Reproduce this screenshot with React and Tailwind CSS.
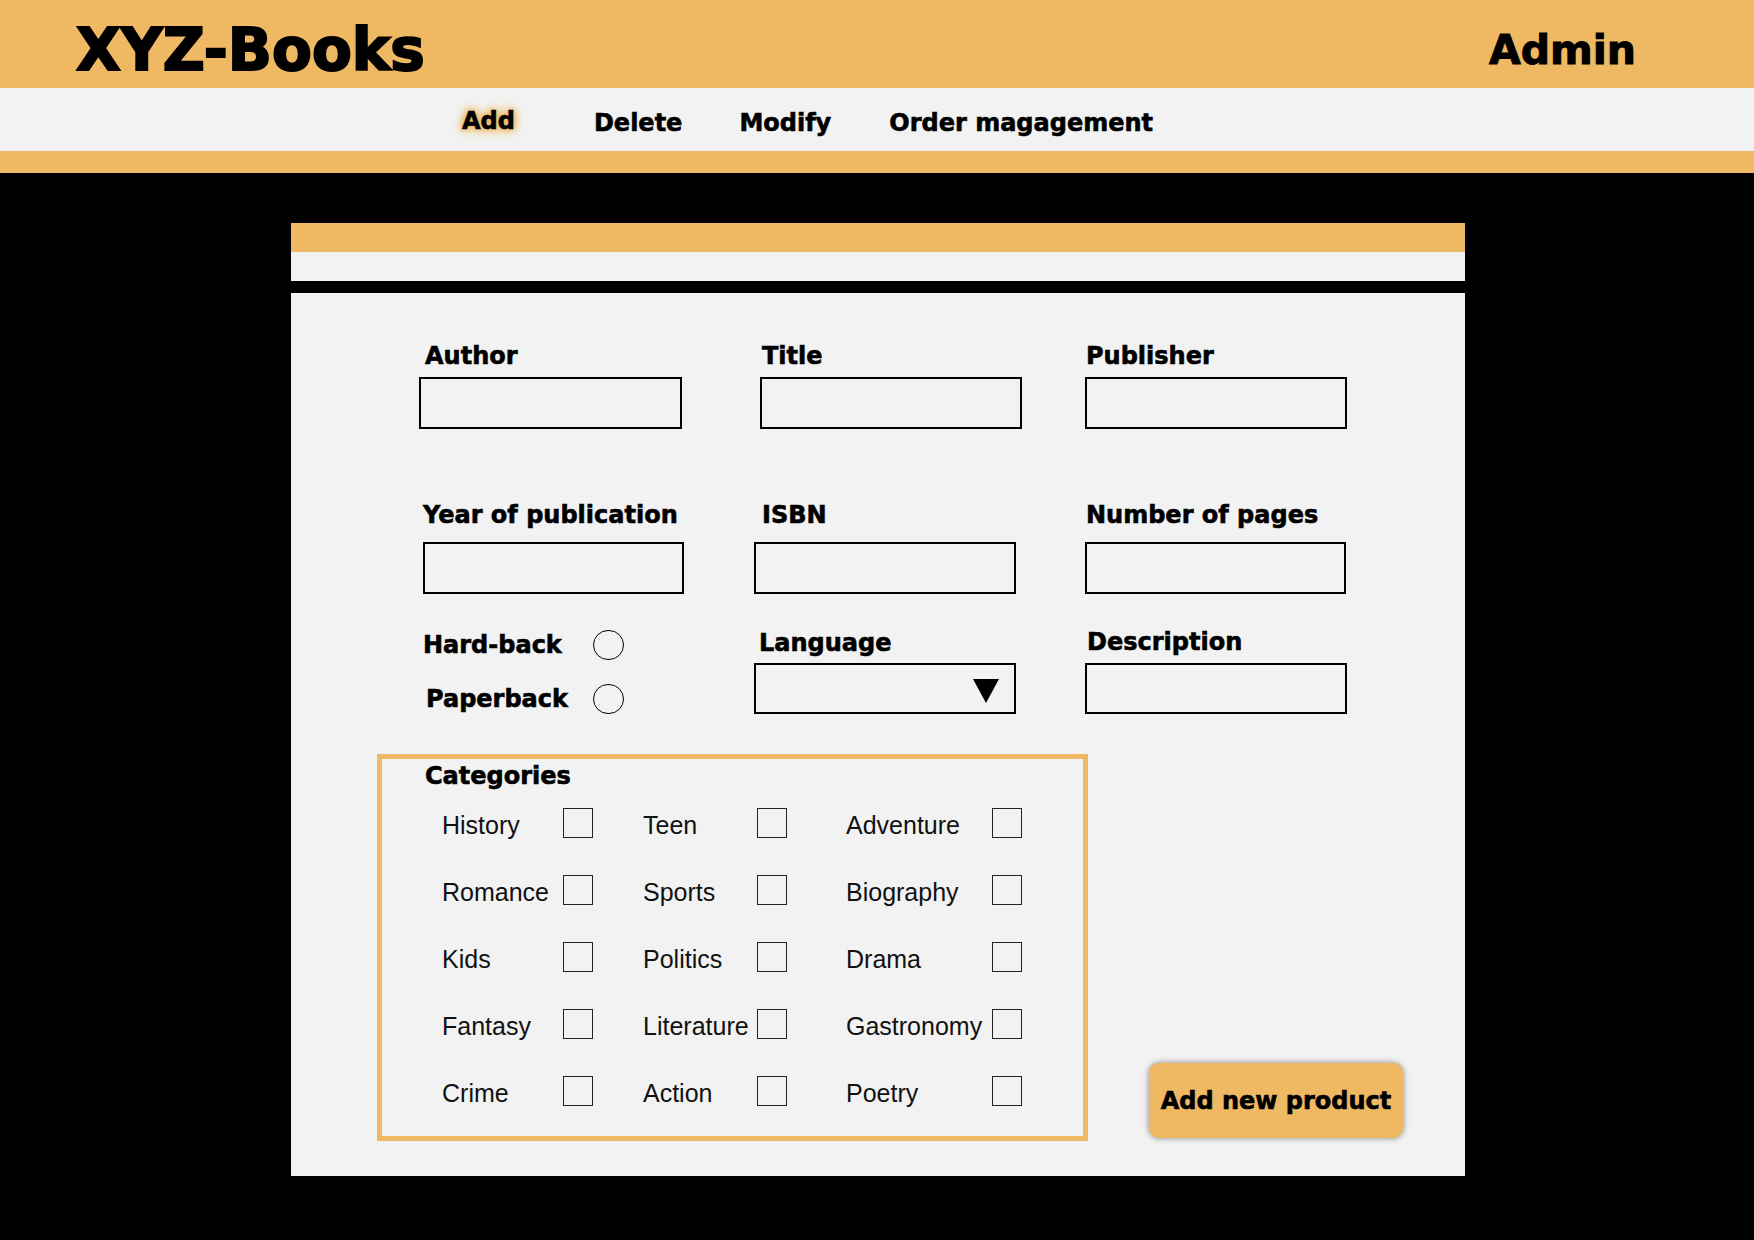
import React from "react";

const categories = [
  ["History", "Teen", "Adventure"],
  ["Romance", "Sports", "Biography"],
  ["Kids", "Politics", "Drama"],
  ["Fantasy", "Literature", "Gastronomy"],
  ["Crime", "Action", "Poetry"],
];

const cellWidths = ["w-[201px]", "w-[203px]", "w-[176px]"];
const labelWidths = ["w-[121px]", "w-[114px]", "w-[146px]"];

const Label = ({ children, className = "" }) => (
  <div
    className={`font-['DejaVu_Sans',sans-serif] text-[24px] leading-[24px] font-bold text-black whitespace-nowrap [-webkit-text-stroke:0.6px_black] ${className}`}
  >
    {children}
  </div>
);

const TextBox = ({ className = "" }) => (
  <input
    type="text"
    className={`block border-2 border-black bg-transparent outline-none ${className}`}
  />
);

const Radio = () => (
  <span className="block w-[31px] h-[30px] rounded-full border-[1.5px] border-black" />
);

const App = () => {
  return (
    <div className="w-full h-[1240px] bg-black overflow-hidden">
      {/* header */}
      <header className="h-[88px] bg-[#efb964] flex items-start justify-between pl-[76px] pr-[118px]">
        <div className="mt-[21px] font-['DejaVu_Sans',sans-serif] text-[58px] leading-[58px] font-bold text-black [-webkit-text-stroke:2px_black]">
          XYZ-Books
        </div>
        <div className="mt-[30px] font-['DejaVu_Sans',sans-serif] text-[41px] leading-[41px] font-bold text-black [-webkit-text-stroke:1px_black]">
          Admin
        </div>
      </header>

      <nav className="h-[63px] bg-[#f2f2f2] flex items-start pl-[462px] pt-[23px]">
        <Label className="-mt-[2px] [text-shadow:0_0_4px_#efb964,0_0_7px_#efb964,0_0_10px_#efb964,0_0_12px_#efb964]">
          Add
        </Label>
        <Label className="ml-[79px]">Delete</Label>
        <Label className="ml-[57px]">Modify</Label>
        <Label className="ml-[58px]">Order magagement</Label>
      </nav>
      <div className="h-[22px] bg-[#efb964]" />

      {/* form panel */}
      <div className="ml-[291px] mt-[50px] w-[1174px]">
        <div className="h-[29px] bg-[#efb964]" />
        <div className="h-[29px] bg-[#f2f2f2]" />

        <div className="mt-[12px] bg-[#f2f2f2] pt-[51px] pb-[35px]">
          {/* row 1 */}
          <div className="flex">
            <div className="ml-[128px] w-[263px]">
              <Label className="pl-[6px]">Author</Label>
              <TextBox className="mt-[9px] w-[263px] h-[52px]" />
            </div>
            <div className="ml-[78px] w-[262px]">
              <Label className="pl-[2px]">Title</Label>
              <TextBox className="mt-[9px] w-[262px] h-[52px]" />
            </div>
            <div className="ml-[63px] w-[262px]">
              <Label className="pl-[1px]">Publisher</Label>
              <TextBox className="mt-[9px] w-[262px] h-[52px]" />
            </div>
          </div>

          {/* row 2 */}
          <div className="flex mt-[74px]">
            <div className="ml-[132px] w-[261px]">
              <Label>Year of publication</Label>
              <TextBox className="mt-[15px] w-[261px] h-[52px]" />
            </div>
            <div className="ml-[70px] w-[262px]">
              <Label className="pl-[8px]">ISBN</Label>
              <TextBox className="mt-[15px] w-[262px] h-[52px]" />
            </div>
            <div className="ml-[69px] w-[261px]">
              <Label className="pl-[1px]">Number of pages</Label>
              <TextBox className="mt-[15px] w-[261px] h-[52px]" />
            </div>
          </div>

          {/* row 3 */}
          <div className="flex mt-[36px]">
            <div className="ml-[132px] w-[331px]">
              <div className="flex items-center h-[30px]">
                <Label className="w-[170px]">Hard-back</Label>
                <Radio />
              </div>
              <div className="flex items-center h-[30px] mt-[24px]">
                <Label className="w-[170px] pl-[3px]">Paperback</Label>
                <Radio />
              </div>
            </div>
            <div className="w-[262px]">
              <Label className="pl-[5px] mt-[1px]">Language</Label>
              <div className="mt-[8px] h-[51px] border-2 border-black flex items-center justify-end pr-[15px]">
                <svg width="26" height="24" viewBox="0 0 26 24" className="mt-[4px]">
                  <polygon points="0,0 26,0 13,24" fill="#000" />
                </svg>
              </div>
            </div>
            <div className="ml-[69px] w-[262px]">
              <Label className="pl-[2px]">Description</Label>
              <TextBox className="mt-[9px] w-[262px] h-[51px]" />
            </div>
          </div>

          {/* categories + button */}
          <div className="flex items-end mt-[40px]">
            <div className="ml-[86px] w-[711px] border-[5px] border-[#efb964] pt-[5px] pl-[43px] pb-[30px]">
              <Label>Categories</Label>
              <div className="mt-[20px] pl-[17px] flex flex-col gap-[37px]">
                {categories.map((row, i) => (
                  <div key={i} className="flex h-[30px]">
                    {row.map((name, j) => (
                      <div key={name} className={`flex items-center ${cellWidths[j]}`}>
                        <span
                          className={`${labelWidths[j]} pt-[4px] font-['Liberation_Sans',Arial,sans-serif] text-[25px] leading-[25px] text-[#111] whitespace-nowrap`}
                        >
                          {name}
                        </span>
                        <input
                          type="checkbox"
                          className="appearance-none block w-[30px] h-[30px] border border-[#222] bg-transparent"
                        />
                      </div>
                    ))}
                  </div>
                ))}
              </div>
            </div>

            <button className="ml-[61px] mb-[3px] w-[254px] h-[75px] rounded-[10px] bg-[#efb964] shadow-[0_0_6px_rgba(0,0,0,0.45)] flex items-center justify-center">
              <Label>Add new product</Label>
            </button>
          </div>
        </div>
      </div>
    </div>
  );
};

export default App;
